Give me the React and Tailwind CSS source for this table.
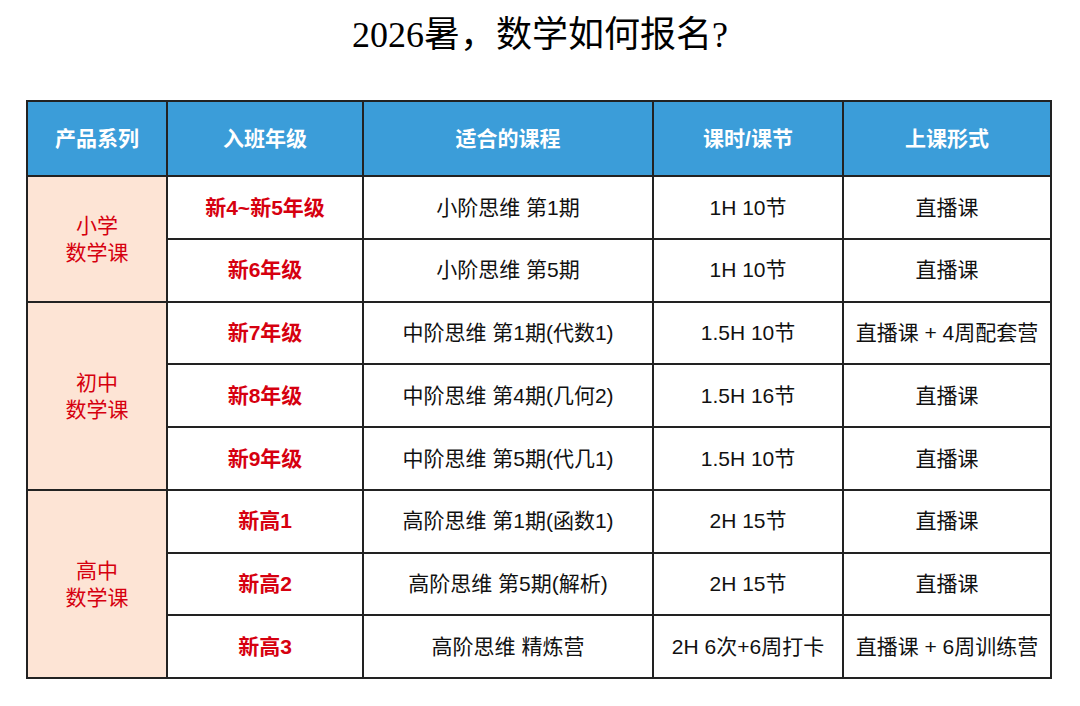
import React from "react";

const rows = [
  { grade: "新4~新5年级", course: "小阶思维 第1期", hours: "1H 10节", form: "直播课" },
  { grade: "新6年级", course: "小阶思维 第5期", hours: "1H 10节", form: "直播课" },
  { grade: "新7年级", course: "中阶思维 第1期(代数1)", hours: "1.5H 10节", form: "直播课 + 4周配套营" },
  { grade: "新8年级", course: "中阶思维 第4期(几何2)", hours: "1.5H 16节", form: "直播课" },
  { grade: "新9年级", course: "中阶思维 第5期(代几1)", hours: "1.5H 10节", form: "直播课" },
  { grade: "新高1", course: "高阶思维 第1期(函数1)", hours: "2H 15节", form: "直播课" },
  { grade: "新高2", course: "高阶思维 第5期(解析)", hours: "2H 15节", form: "直播课" },
  { grade: "新高3", course: "高阶思维 精炼营", hours: "2H 6次+6周打卡", form: "直播课 + 6周训练营" },
];

const groups = {
  0: { rows: 2, l1: "小学", l2: "数学课" },
  2: { rows: 3, l1: "初中", l2: "数学课" },
  5: { rows: 3, l1: "高中", l2: "数学课" },
};

const sans = { fontFamily: '"Liberation Sans", "Noto Sans CJK SC", sans-serif' };

export default function App() {
  return (
    <div className="w-[1080px] h-[706px] bg-white" style={sans}>
      <div
        className="h-[68px] pt-[2px] flex items-center justify-center text-[36px] font-normal text-black"
        style={{ fontFamily: '"Liberation Serif", "Noto Sans CJK SC", serif' }}
      >
        2026暑，数学如何报名?
      </div>
      <table className="ml-[26px] mt-[32px] border-collapse table-fixed w-[1024px] text-[21px]">
        <colgroup>
          <col className="w-[140px]" />
          <col className="w-[196px]" />
          <col className="w-[290px]" />
          <col className="w-[190px]" />
          <col className="w-[208px]" />
        </colgroup>
        <thead>
          <tr className="h-[75px] bg-[#3b9dd9] text-white">
            <th className="border-2 border-[#222] text-[21px] font-bold">产品系列</th>
            <th className="border-2 border-[#222] text-[21px] font-bold">入班年级</th>
            <th className="border-2 border-[#222] text-[21px] font-bold">适合的课程</th>
            <th className="border-2 border-[#222] text-[21px] font-bold">课时/课节</th>
            <th className="border-2 border-[#222] text-[21px] font-bold">上课形式</th>
          </tr>
        </thead>
        <tbody>
          {rows.map((r, i) => (
            <tr key={i} className="h-[62.75px]">
              {groups[i] && (
                <td
                  rowSpan={groups[i].rows}
                  className="border-2 border-[#222] bg-[#fde4d5] text-[#d6000f] text-center leading-[27px] text-[21px]"
                >
                  <div>{groups[i].l1}</div>
                  <div>{groups[i].l2}</div>
                </td>
              )}
              <td className="border-2 border-[#222] text-center text-[#d6000f] font-bold">{r.grade}</td>
              <td className="border-2 border-[#222] text-center text-[#111]">{r.course}</td>
              <td className="border-2 border-[#222] text-center text-[#111]">{r.hours}</td>
              <td className="border-2 border-[#222] text-center text-[#111] whitespace-nowrap">{r.form}</td>
            </tr>
          ))}
        </tbody>
      </table>
    </div>
  );
}
